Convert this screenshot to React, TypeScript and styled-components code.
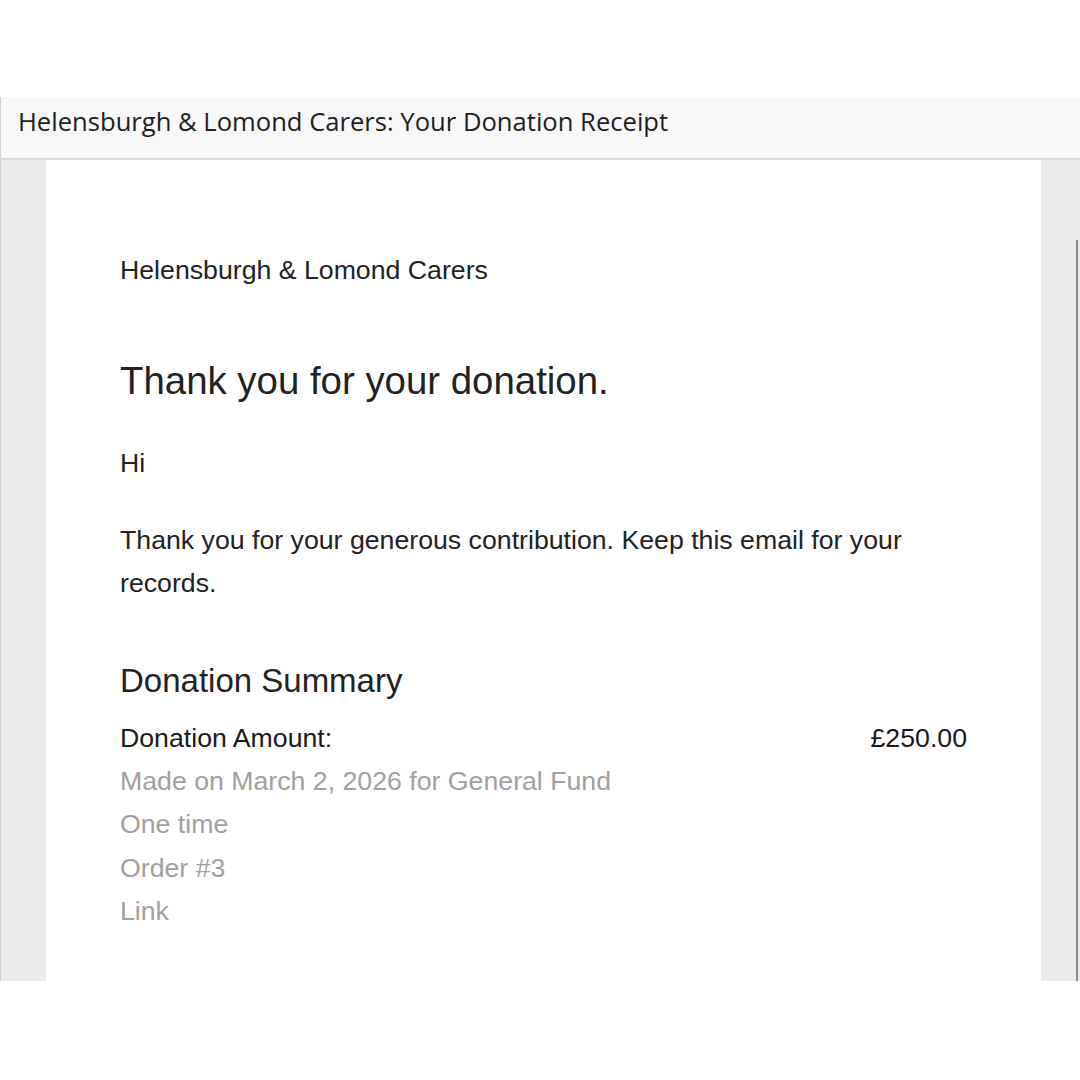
import React from 'react';
import styled, { createGlobalStyle } from 'styled-components';

const GlobalStyle = createGlobalStyle`
  body {
    margin: 0;
    background: #ffffff;
  }
`;

const details = [
  'Made on March 2, 2026 for General Fund',
  'One time',
  'Order #3',
  'Link',
];

const App = () => {
  return (
    <>
      <GlobalStyle />
      <Page>
        <TitleBar>Helensburgh &amp; Lomond Carers: Your Donation Receipt</TitleBar>
        <Frame>
          <Mail>
            <OrgName>Helensburgh &amp; Lomond Carers</OrgName>
            <Heading>Thank you for your donation.</Heading>
            <Paragraph>Hi</Paragraph>
            <Paragraph>
              Thank you for your generous contribution. Keep this email for your
              records.
            </Paragraph>
            <SummaryTitle>Donation Summary</SummaryTitle>
            <AmountRow>
              <span>Donation Amount:</span>
              <span>£250.00</span>
            </AmountRow>
            {details.map((line) => (
              <Detail key={line}>{line}</Detail>
            ))}
          </Mail>
          <Gutter>
            <ScrollThumb />
          </Gutter>
        </Frame>
      </Page>
    </>
  );
};

export default App;

const Page = styled.div`
  padding-top: 97px;
  width: 1080px;
`;

const TitleBar = styled.div`
  height: 63px;
  box-sizing: border-box;
  padding: 8px 0 0 17px;
  background: #f8f8f8;
  border-left: 1px solid #d2d2d2;
  border-bottom: 2px solid #dcdcdc;
  font-family: 'Open Sans', sans-serif;
  font-size: 25.6px;
  line-height: 34px;
  color: #1e1e1e;
`;

const Frame = styled.div`
  display: flex;
  height: 821px;
  padding-left: 45px;
  background: #ebebeb;
  border-left: 1px solid #d2d2d2;
  box-sizing: border-box;
`;

const Mail = styled.div`
  width: 995px;
  box-sizing: border-box;
  padding: 90px 74px 0 74px;
  background: #ffffff;
  font-family: 'Liberation Sans', Arial, sans-serif;
  color: #222222;
`;

const OrgName = styled.div`
  font-size: 26.7px;
  line-height: 40px;
`;

const Heading = styled.h1`
  margin: 67px 0 37px;
  font-size: 38.4px;
  font-weight: normal;
  line-height: 48px;
`;

const Paragraph = styled.p`
  margin: 0 0 33px;
  font-size: 26.7px;
  line-height: 43.5px;
`;

const SummaryTitle = styled.h2`
  margin: 55px 0 15px;
  font-size: 33px;
  font-weight: normal;
  line-height: 40px;
`;

const AmountRow = styled.div`
  display: flex;
  justify-content: space-between;
  font-size: 26.7px;
  line-height: 44px;
  color: #1a1a1a;
`;

const Detail = styled.div`
  font-size: 26.7px;
  line-height: 43.5px;
  color: #a0a0a0;
`;

const Gutter = styled.div`
  flex: 1;
  display: flex;
  justify-content: flex-end;
  padding-top: 80px;
  padding-right: 2px;
`;

const ScrollThumb = styled.div`
  width: 2px;
  background: #8a8a8a;
`;
